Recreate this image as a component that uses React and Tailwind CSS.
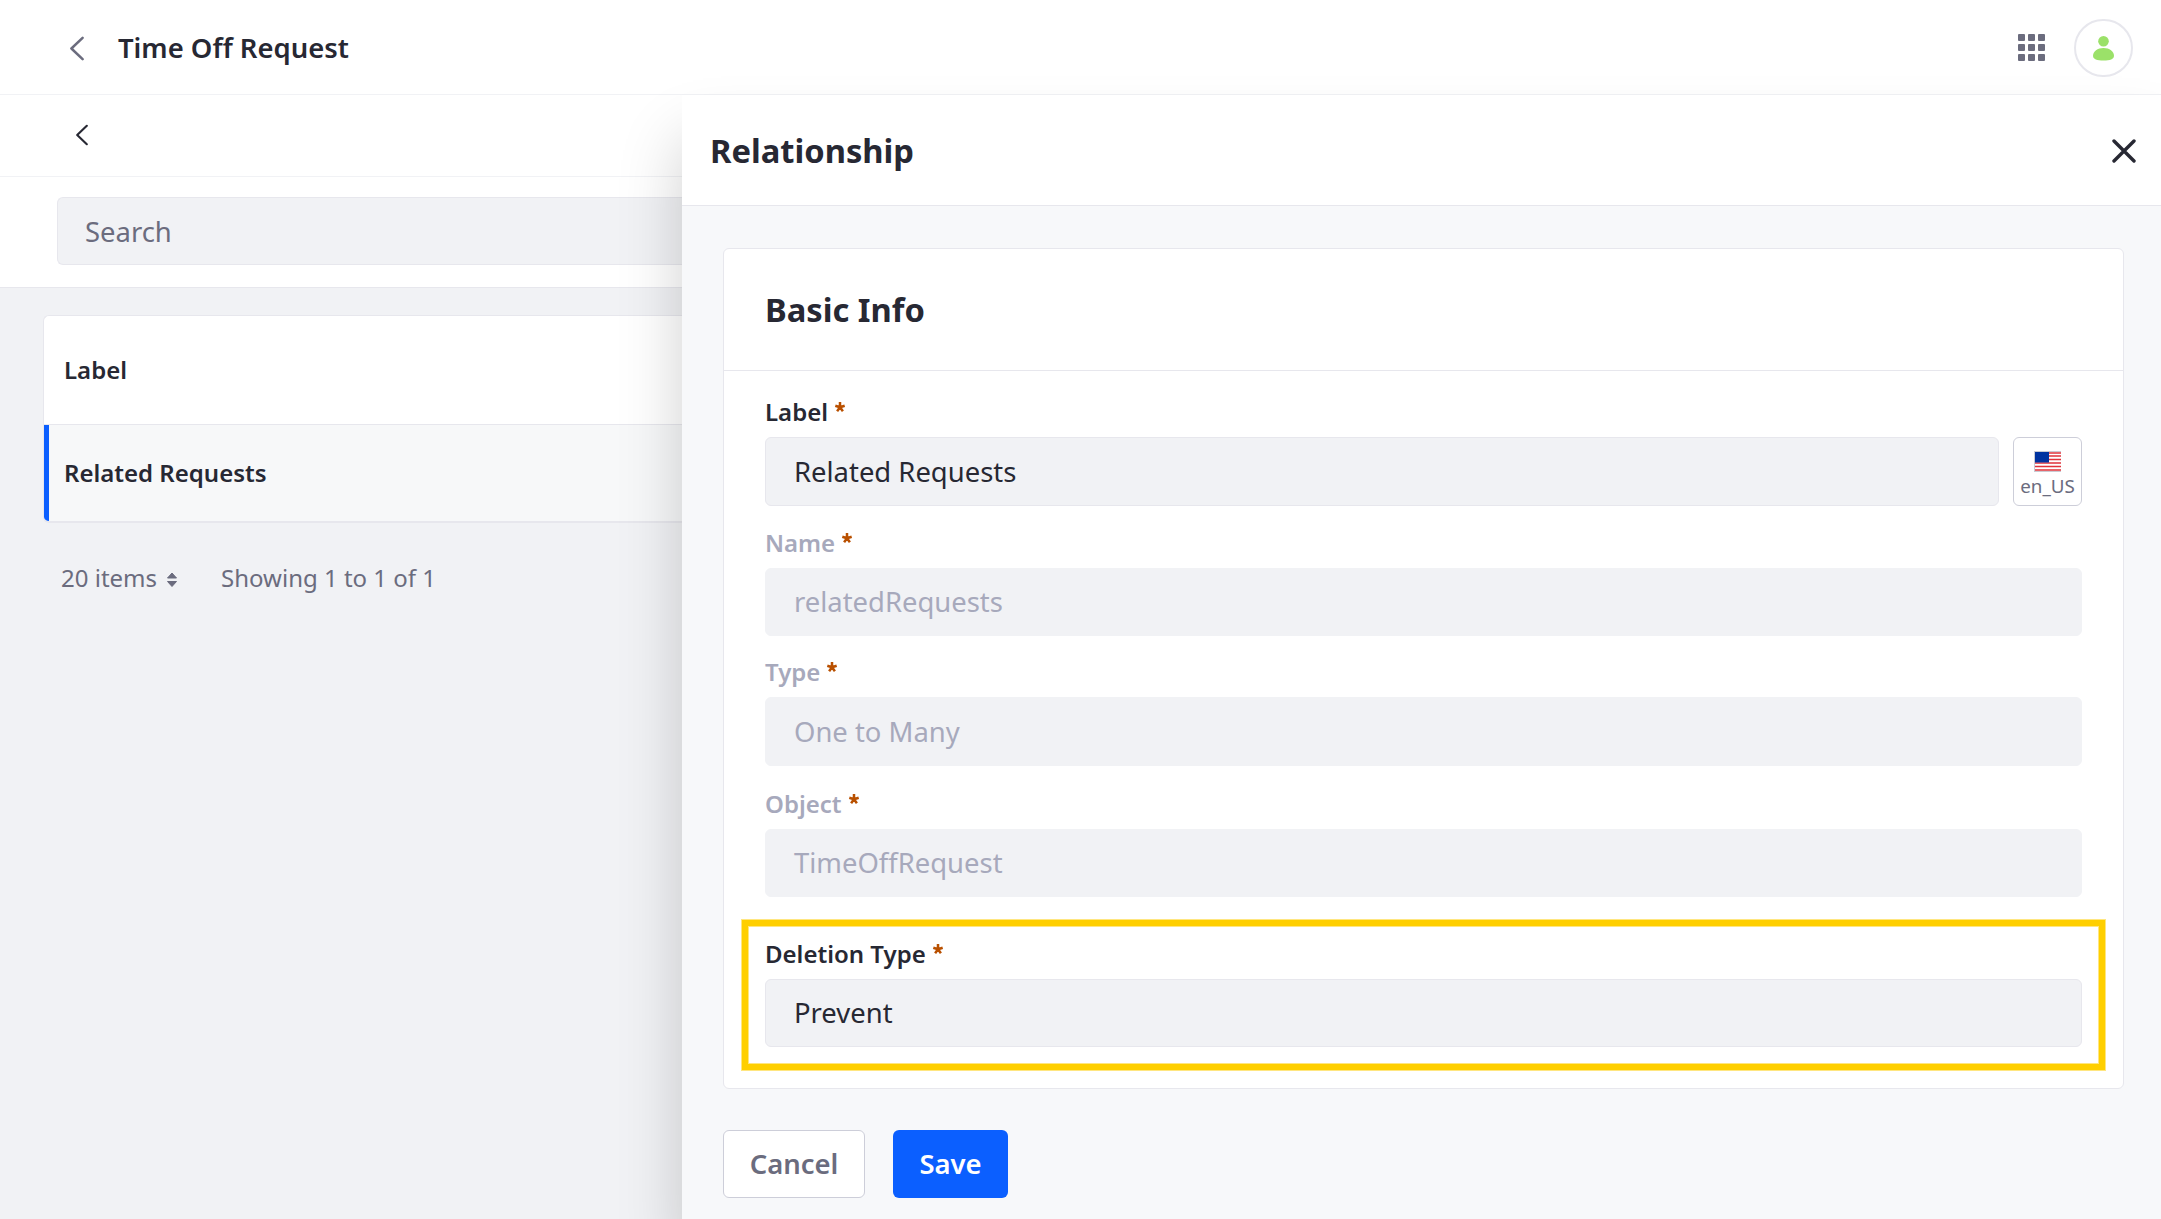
import React from "react";

function Chevron({ className }) {
  return (
    <svg viewBox="0 0 14 24" fill="none" stroke="currentColor" strokeWidth="2.5" strokeLinecap="round" strokeLinejoin="round" className={className}>
      <path d="M12.6 1.3 1.4 12 12.6 22.7" />
    </svg>
  );
}

function Star() {
  return (
    <svg viewBox="0 0 10 10" stroke="#b95000" strokeWidth="2.5" className="mt-[8px] ml-[7px] size-[10px] overflow-visible">
      <path d="M5 5.200V0M5 5.200 .3 3.700M5 5.200 9.700 3.700M5 5.200 2.100 9.200M5 5.200l2.900 4" />
    </svg>
  );
}

function Label({ children, disabled }) {
  return (
    <div className={`flex h-[36px] items-start text-[24px] leading-[36px] font-semibold ${disabled ? "text-[#a7a9bc]" : "text-[#272833]"}`}>
      <span>{children}</span>
      <Star />
    </div>
  );
}

function Input({ children, disabled, className }) {
  return (
    <div className={`mt-[7px] flex items-center rounded-[6px] border bg-[#f1f2f5] px-[28px] text-[27.43px] ${disabled ? "border-[#f1f2f5] text-[#a7a9bc]" : "border-[#e7e7ed] text-[#272833]"} ${className}`}>
      {children}
    </div>
  );
}

function Flag() {
  return (
    <svg viewBox="0 0 27 21" className="h-[21px] w-[27px]">
      <rect width="27" height="21" fill="#c9cbd3" />
      <rect x="1" y="1" width="26" height="19" fill="#fff" />
      <path d="M1 2h26M1 5h26M1 8.500h26M1 12h26M1 15.500h26M1 19h26" stroke="#e0323a" strokeWidth="1.5" />
      <rect x="1" y="1" width="14" height="10.5" fill="#0033a0" />
    </svg>
  );
}

export default function App() {
  return (
    <div className="flex h-[1219px] w-[2161px] flex-col overflow-hidden bg-[#f1f2f5] font-['Noto_Sans',sans-serif] text-[#272833]">
      <header className="flex h-[95px] shrink-0 items-center border-b border-[#f1f2f5] bg-white pt-[2px] pr-[28px] pl-[70px]">
        <Chevron className="h-[25px] w-[14px] text-[#6b6c7e]" />
        <h1 className="ml-[34px] text-[27.43px] font-semibold">Time Off Request</h1>
        <div className="mb-px ml-auto grid grid-cols-3 gap-[3px]">
          {Array.from({ length: 9 }, (_, i) => (
            <span key={i} className="size-[7px] rounded-[1px] bg-[#6b6c7e]" />
          ))}
        </div>
        <div className="ml-[29px] flex h-[58px] w-[59px] items-center justify-center rounded-full border-2 border-[#e7e7ed]">
          <svg viewBox="0 0 21 25" fill="#9be169" className="h-[25px] w-[21px]">
            <circle cx="10.5" cy="5.3" r="5.3" />
            <path d="M10.5 12C4.500 12 0 15.500 0 19.800 0 23.300 4 24.600 10.500 24.600S21 23.300 21 19.800C21 15.500 16.500 12 10.500 12Z" />
          </svg>
        </div>
      </header>
      <div className="flex min-h-0 flex-1">
        <main className="flex w-[682px] shrink-0 flex-col">
          <div className="flex h-[82px] items-center border-b border-[#f1f2f5] bg-white pb-px pl-[76px]">
            <Chevron className="h-[22px] w-[12px] text-[#272833]" />
          </div>
          <div className="h-[111px] border-b border-[#e7e7ed] bg-white pt-[20px] pl-[57px]">
            <div className="flex h-[68px] items-center rounded-l-[6px] border border-r-0 border-[#e7e7ed] bg-[#f1f2f5] px-[27px] pt-[2px] text-[27.43px] text-[#6b6c7e]">Search</div>
          </div>
          <div className="mt-[27px] ml-[43px] flex flex-col overflow-hidden rounded-l-[6px] border border-r-0 border-b-2 border-[#e7e7ed] bg-white text-[24px] font-semibold">
            <div className="flex h-[109px] items-center border-b border-[#e7e7ed] pl-[20px]">Label</div>
            <div className="flex h-[96px] items-center border-l-[5px] border-[#0b5fff] bg-[#f7f8f9] pl-[15px]">Related Requests</div>
          </div>
          <div className="mt-[37px] flex items-center pl-[61px] text-[24px] leading-[36px] text-[#6b6c7e]">
            <span>20 items</span>
            <svg viewBox="0 0 10 18" fill="currentColor" className="mt-[2px] ml-[10px] h-[18px] w-[10px]">
              <path d="M5 3 9.500 8H.5ZM5 16.500.5 11.500h9Z" stroke="currentColor" strokeWidth="1" strokeLinejoin="round" />
            </svg>
            <span className="ml-[44px]">Showing 1 to 1 of 1</span>
          </div>
        </main>
        <aside className="flex min-w-0 flex-1 flex-col bg-[#f7f8fa] shadow-[0_44px_60px_rgba(0,0,0,0.19)]">
          <div className="flex h-[111px] shrink-0 items-center border-b border-[#e7e7ed] bg-white pt-px pr-[25px] pl-[28px]">
            <h2 className="text-[32.7px] font-bold">Relationship</h2>
            <svg viewBox="0 0 24 24" stroke="#272833" strokeWidth="3.4" strokeLinecap="round" className="ml-auto size-[24px]">
              <path d="M2 2 22 22M22 2 2 22" />
            </svg>
          </div>
          <section className="mt-[42px] ml-[41px] h-[841px] w-[1401px] shrink-0 rounded-[6px] border border-[#e7e7ed] bg-white">
            <div className="flex h-[122px] items-center border-b border-[#e7e7ed] pl-[41px]">
              <h3 className="text-[32.7px] font-bold">Basic Info</h3>
            </div>
            <div className="pt-[23px] pr-[41px] pl-[41px]">
              <Label>Label</Label>
              <div className="flex">
                <Input className="h-[69px] w-[1234px]">Related Requests</Input>
                <div className="mt-[7px] ml-[14px] flex h-[69px] w-[69px] flex-col items-center rounded-[6px] border border-[#cdced9] pt-[13px]">
                  <Flag />
                  <span className="text-[18.8px] leading-[28px] text-[#6b6c7e]">en_US</span>
                </div>
              </div>
              <div className="mt-[19px]"><Label disabled>Name</Label><Input disabled className="h-[68px]">relatedRequests</Input></div>
              <div className="mt-[18px]"><Label disabled>Type</Label><Input disabled className="h-[69px]">One to Many</Input></div>
              <div className="mt-[20px]"><Label disabled>Object</Label><Input disabled className="h-[68px]">TimeOffRequest</Input></div>
              <div className="-mx-[23px] mt-[23px] h-[150px] border-[6px] border-[#ffcf00] px-[17px] pt-[10px] shadow-[0_0_0_1px_#ffe680,inset_0_0_0_1px_#ffe680]">
                <Label>Deletion Type</Label>
                <Input className="h-[68px]">Prevent</Input>
              </div>
            </div>
          </section>
          <div className="mt-[41px] ml-[41px] flex gap-[28px] text-[27.43px] font-semibold">
            <button className="h-[68px] w-[142px] rounded-[6px] border border-[#cdced9] bg-white text-[#6b6c7e]">Cancel</button>
            <button className="h-[68px] w-[115px] rounded-[6px] bg-[#0b5fff] text-white">Save</button>
          </div>
        </aside>
      </div>
    </div>
  );
}
